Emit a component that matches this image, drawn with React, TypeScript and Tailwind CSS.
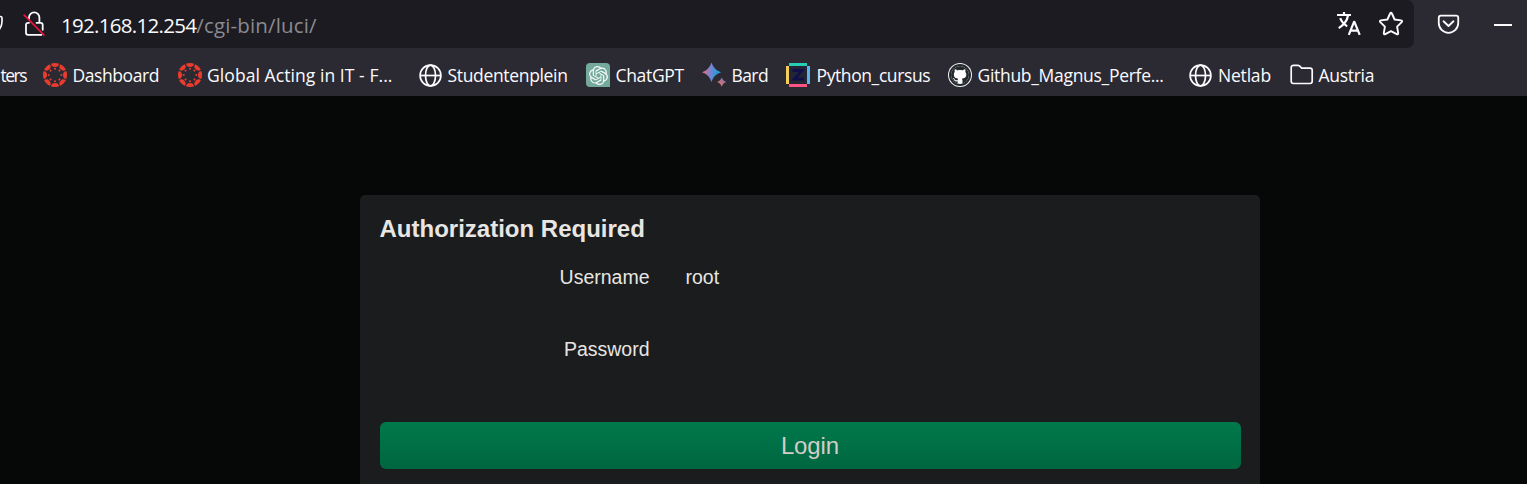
import type { ReactNode } from "react";
import { FaGithub } from "react-icons/fa";
import { SiOpenai } from "react-icons/si";

const spokes = [0, 45, 90, 135, 180, 225, 270, 315];

function CanvasIcon({ id }: { id: string }) {
  return (
    <svg width="24" height="24" viewBox="0 0 24 24" fill="#ea3c2e">
      <clipPath id={id}>
        <circle cx="12" cy="12" r="12" />
      </clipPath>
      {spokes.map((a) => (
        <g key={a} transform={`rotate(${a} 12 12)`}>
          <circle cx="12" cy="0" r="4" clipPath={`url(#${id})`} />
          <circle cx="12" cy="5.7" r="1.05" />
        </g>
      ))}
    </svg>
  );
}

function GlobeIcon() {
  return (
    <svg width="24" height="24" viewBox="0 0 24 24" fill="none" stroke="#fbfbfe" strokeWidth="1.7">
      <circle cx="11.5" cy="12.5" r="10.4" />
      <ellipse cx="11.5" cy="12.5" rx="5" ry="10.4" />
      <path d="M1 12.5h21" />
    </svg>
  );
}

function ChatIcon() {
  return (
    <span className="flex size-6 items-center justify-center rounded-[4px] rounded-br-none bg-[#75a99c]">
      <SiOpenai size={19} color="#f4faf8" />
    </span>
  );
}

function BardIcon() {
  return (
    <svg width="26" height="26" viewBox="0 0 26 26">
      <defs>
        <linearGradient id="bard" x1="0" x2="1" y1="0.1" y2="0.2">
          <stop offset="0.1" stopColor="#e0707a" />
          <stop offset="0.45" stopColor="#7d83d0" />
          <stop offset="0.8" stopColor="#2c98dc" />
        </linearGradient>
        <linearGradient id="bard-small" x1="0" x2="1" y1="1" y2="0">
          <stop offset="0.2" stopColor="#e0705f" />
          <stop offset="0.9" stopColor="#7b75c8" />
        </linearGradient>
      </defs>
      <path fill="url(#bard)" d="M9.5.5c1.800 5.100 4.500 7.900 9.700 9.700-5.200 1.800-7.900 4.600-9.700 9.700C7.700 14.800 5 12 0 10.200 5 8.400 7.700 5.600 9.500.5Z" />
      <path fill="url(#bard-small)" d="M19.700 15.500c.9 2.400 2.200 3.700 4.600 4.600-2.400.9-3.700 2.200-4.600 4.600-.9-2.400-2.200-3.700-4.600-4.600 2.400-.9 3.700-2.200 4.600-4.600Z" />
    </svg>
  );
}

function NotebookIcon() {
  return (
    <svg width="24" height="24" viewBox="0 0 24 24">
      <rect x="2" y="2" width="20" height="20" fill="#242532" />
      <path d="M0 3h3v18H0z" fill="#f5cd5b" />
      <path d="M3 0h18v3H3z" fill="#25cdb4" />
      <path d="M21 3h3v18h-3z" fill="#58b4ef" />
      <path d="M3 21h18v3H3z" fill="#fb5483" />
      <path d="M6.500 7.500h9.500l-7.500 8.500H18" fill="none" stroke="#10104a" strokeWidth="2.800" />
    </svg>
  );
}

function GithubIcon() {
  return (
    <span className="flex size-6 items-center justify-center rounded-full bg-[#f2f2f4]">
      <span className="flex size-[21.500px] items-center justify-center rounded-full bg-[#24292e]">
        <span className="flex size-[18px] items-center justify-center overflow-hidden rounded-full bg-white">
          <FaGithub size={20} color="#24292e" className="shrink-0" />
        </span>
      </span>
    </span>
  );
}

function FolderIcon() {
  return (
    <svg width="24" height="24" viewBox="0 0 24 24" fill="none" stroke="#fbfbfe" strokeWidth="1.700" strokeLinejoin="round">
      <path d="M1.200 4.500a2.200 2.200 0 0 1 2.200-2.200h4.400c.7 0 1.200.2 1.700.6l2.200 2.200h8.300A2.200 2.200 0 0 1 22.200 7.300v11a2.200 2.200 0 0 1-2.200 2.200H3.400a2.200 2.200 0 0 1-2.200-2.200z" />
    </svg>
  );
}

function LockIcon() {
  return (
    <svg width="24" height="26" viewBox="0 0 24 26" fill="none" strokeLinecap="round">
      <path d="M6 8V6.500a5.200 5.200 0 0 1 10.400 0V11" stroke="#fbfbfe" strokeWidth="1.800" />
      <path d="M6 11.800H5a2 2 0 0 0-2 2V21.800a2 2 0 0 0 2 2h13.500M13.500 11.800H17.700a2 2 0 0 1 2 2v5" stroke="#fbfbfe" strokeWidth="1.800" />
      <path d="M1.200 4.200 21 24" stroke="#f5133f" strokeWidth="1.700" />
    </svg>
  );
}

function TranslateIcon() {
  return (
    <svg width="26" height="26" viewBox="0 0 26 26" fill="none" stroke="#fbfbfe" strokeWidth="2.200">
      <path d="M1 4h14M8 1v3M12 4.500c-.9 5.200-4 9.300-9.300 12.600M4.200 7.200c1.400 3.600 3.700 6.200 7 8.200" />
      <path d="M12.800 23.800 18 10.800h.4l5.300 13M14.700 19.700h7" strokeLinejoin="round" />
    </svg>
  );
}

function StarIcon() {
  return (
    <svg width="26" height="26" viewBox="0 0 26 26" fill="none" stroke="#fbfbfe" strokeWidth="1.900" strokeLinejoin="round">
      <path d="M12.100 2.500q.9-1.500 1.800 0l2.700 6 6.500.9q1.700.5.600 1.700l-4.600 4.500 1.100 6.500q0 1.700-1.500 1.100L13 20.200l-5.700 3q-1.500.6-1.500-1.100l1.100-6.500-4.600-4.500q-1.100-1.200.600-1.700l6.500-.9z" />
    </svg>
  );
}

function PocketIcon() {
  return (
    <svg width="23" height="21" viewBox="0 0 24 22" fill="none" stroke="#fbfbfe" strokeWidth="1.900" strokeLinecap="round" strokeLinejoin="round">
      <path d="M4 1.700h16a2.200 2.200 0 0 1 2.200 2.200v5.600a10.200 10.200 0 0 1-20.400 0V3.900A2.200 2.200 0 0 1 4 1.700Z" />
      <path d="m6.800 7.600 5.200 5 5.200-5" />
    </svg>
  );
}

type Bookmark = { label: string; icon: ReactNode; box: string; text: string };

const bookmarks: Bookmark[] = [
  { label: "Dashboard", icon: <CanvasIcon id="ring-a" />, box: "w-[135px] gap-[5.5px]", text: "tracking-[-0.43px]" },
  { label: "Global Acting in IT - F...", icon: <CanvasIcon id="ring-b" />, box: "w-[241px] gap-[5px]", text: "tracking-[0.07px]" },
  { label: "Studentenplein", icon: <GlobeIcon />, box: "w-[167px] gap-[4.5px]", text: "tracking-[-0.33px]" },
  { label: "ChatGPT", icon: <ChatIcon />, box: "w-[116px] gap-[5.5px]", text: "tracking-[-0.33px]" },
  { label: "Bard", icon: <BardIcon />, box: "w-[84px] gap-[3.5px]", text: "tracking-[-0.6px]" },
  { label: "Python_cursus", icon: <NotebookIcon />, box: "w-[162px] gap-[6.5px]", text: "tracking-[-0.4px]" },
  { label: "Github_Magnus_Perfe...", icon: <GithubIcon />, box: "w-[241px] gap-[5.5px]", text: "tracking-[-0.3px]" },
  { label: "Netlab", icon: <GlobeIcon />, box: "w-[101px] gap-[5px]", text: "tracking-[-0.2px]" },
  { label: "Austria", icon: <FolderIcon />, box: "w-[110px] gap-[4.5px]", text: "tracking-[-0.3px]" },
];

function BrowserChrome() {
  return (
    <header className="h-24 bg-[#2b2a33] font-['Open_Sans',sans-serif] text-[#fbfbfe]">
      <div className="flex h-12 items-center">
        <div className="flex h-12 w-[1414px] items-center rounded-r-[7px] bg-[#1c1b22]">
          <svg width="23" height="24" viewBox="0 0 23 24" fill="none" stroke="#fbfbfe" strokeWidth="1.700">
            <path d="M-1 4.500H.5Q2 4.500 2 6v3.500C2 13 1 15.500-1 18" />
          </svg>
          <LockIcon />
          <div className="ml-[14px] flex-1 whitespace-nowrap pt-[2px] text-[20.500px] leading-[28px]">
            <span className="tracking-[-0.700px]">192.168.12.254</span>
            <span className="tracking-[0.150px] text-[#8a8a90]">/cgi-bin/luci/</span>
          </div>
          <TranslateIcon />
          <span className="ml-4 mr-[10px]">
            <StarIcon />
          </span>
        </div>
        <span className="ml-[23px]">
          <PocketIcon />
        </span>
        <span className="mt-[2px] ml-[34px] h-[2px] w-[18px] bg-[#fbfbfe]" />
      </div>
      <nav className="flex h-12 items-center text-[17.500px] leading-6">
        <span className="flex w-[43px] shrink-0 justify-end pt-[6px] pr-[17px] tracking-[-1.500px]">ters</span>
        {bookmarks.map((b) => (
          <a key={b.label} className={`flex h-12 shrink-0 items-center whitespace-nowrap pt-[6px] ${b.box}`}>
            <span className="shrink-0">{b.icon}</span>
            <span className={b.text}>{b.label}</span>
          </a>
        ))}
      </nav>
    </header>
  );
}

export default function App() {
  return (
    <div className="flex h-[484px] w-[1527px] flex-col overflow-hidden bg-[#060807]">
      <BrowserChrome />
      <main className="mt-[99px] ml-[360px] h-[289px] w-[900px] rounded-t-[5px] bg-[#1b1c1e] px-5 pt-5 font-['Liberation_Sans',Arial,sans-serif] text-[#e8e6e3]">
        <h1 className="-ml-[0.5px] text-2xl leading-7 font-bold">Authorization Required</h1>
        <div className="mt-4 flex h-[72px] text-[19.500px] leading-9">
          <span className="w-[269.5px] text-right">Username</span>
          <span className="ml-9">root</span>
        </div>
        <div className="flex h-[72px] text-[19.500px] leading-9">
          <label className="w-[269.5px] text-right">Password</label>
        </div>
        <button className="mt-[19px] block h-[47px] w-[861px] rounded-[6px] bg-linear-to-b from-[#00794b] to-[#006640] pr-px text-center text-2xl tracking-[-0.1px] text-[#d1cdc7]">
          Login
        </button>
      </main>
    </div>
  );
}
